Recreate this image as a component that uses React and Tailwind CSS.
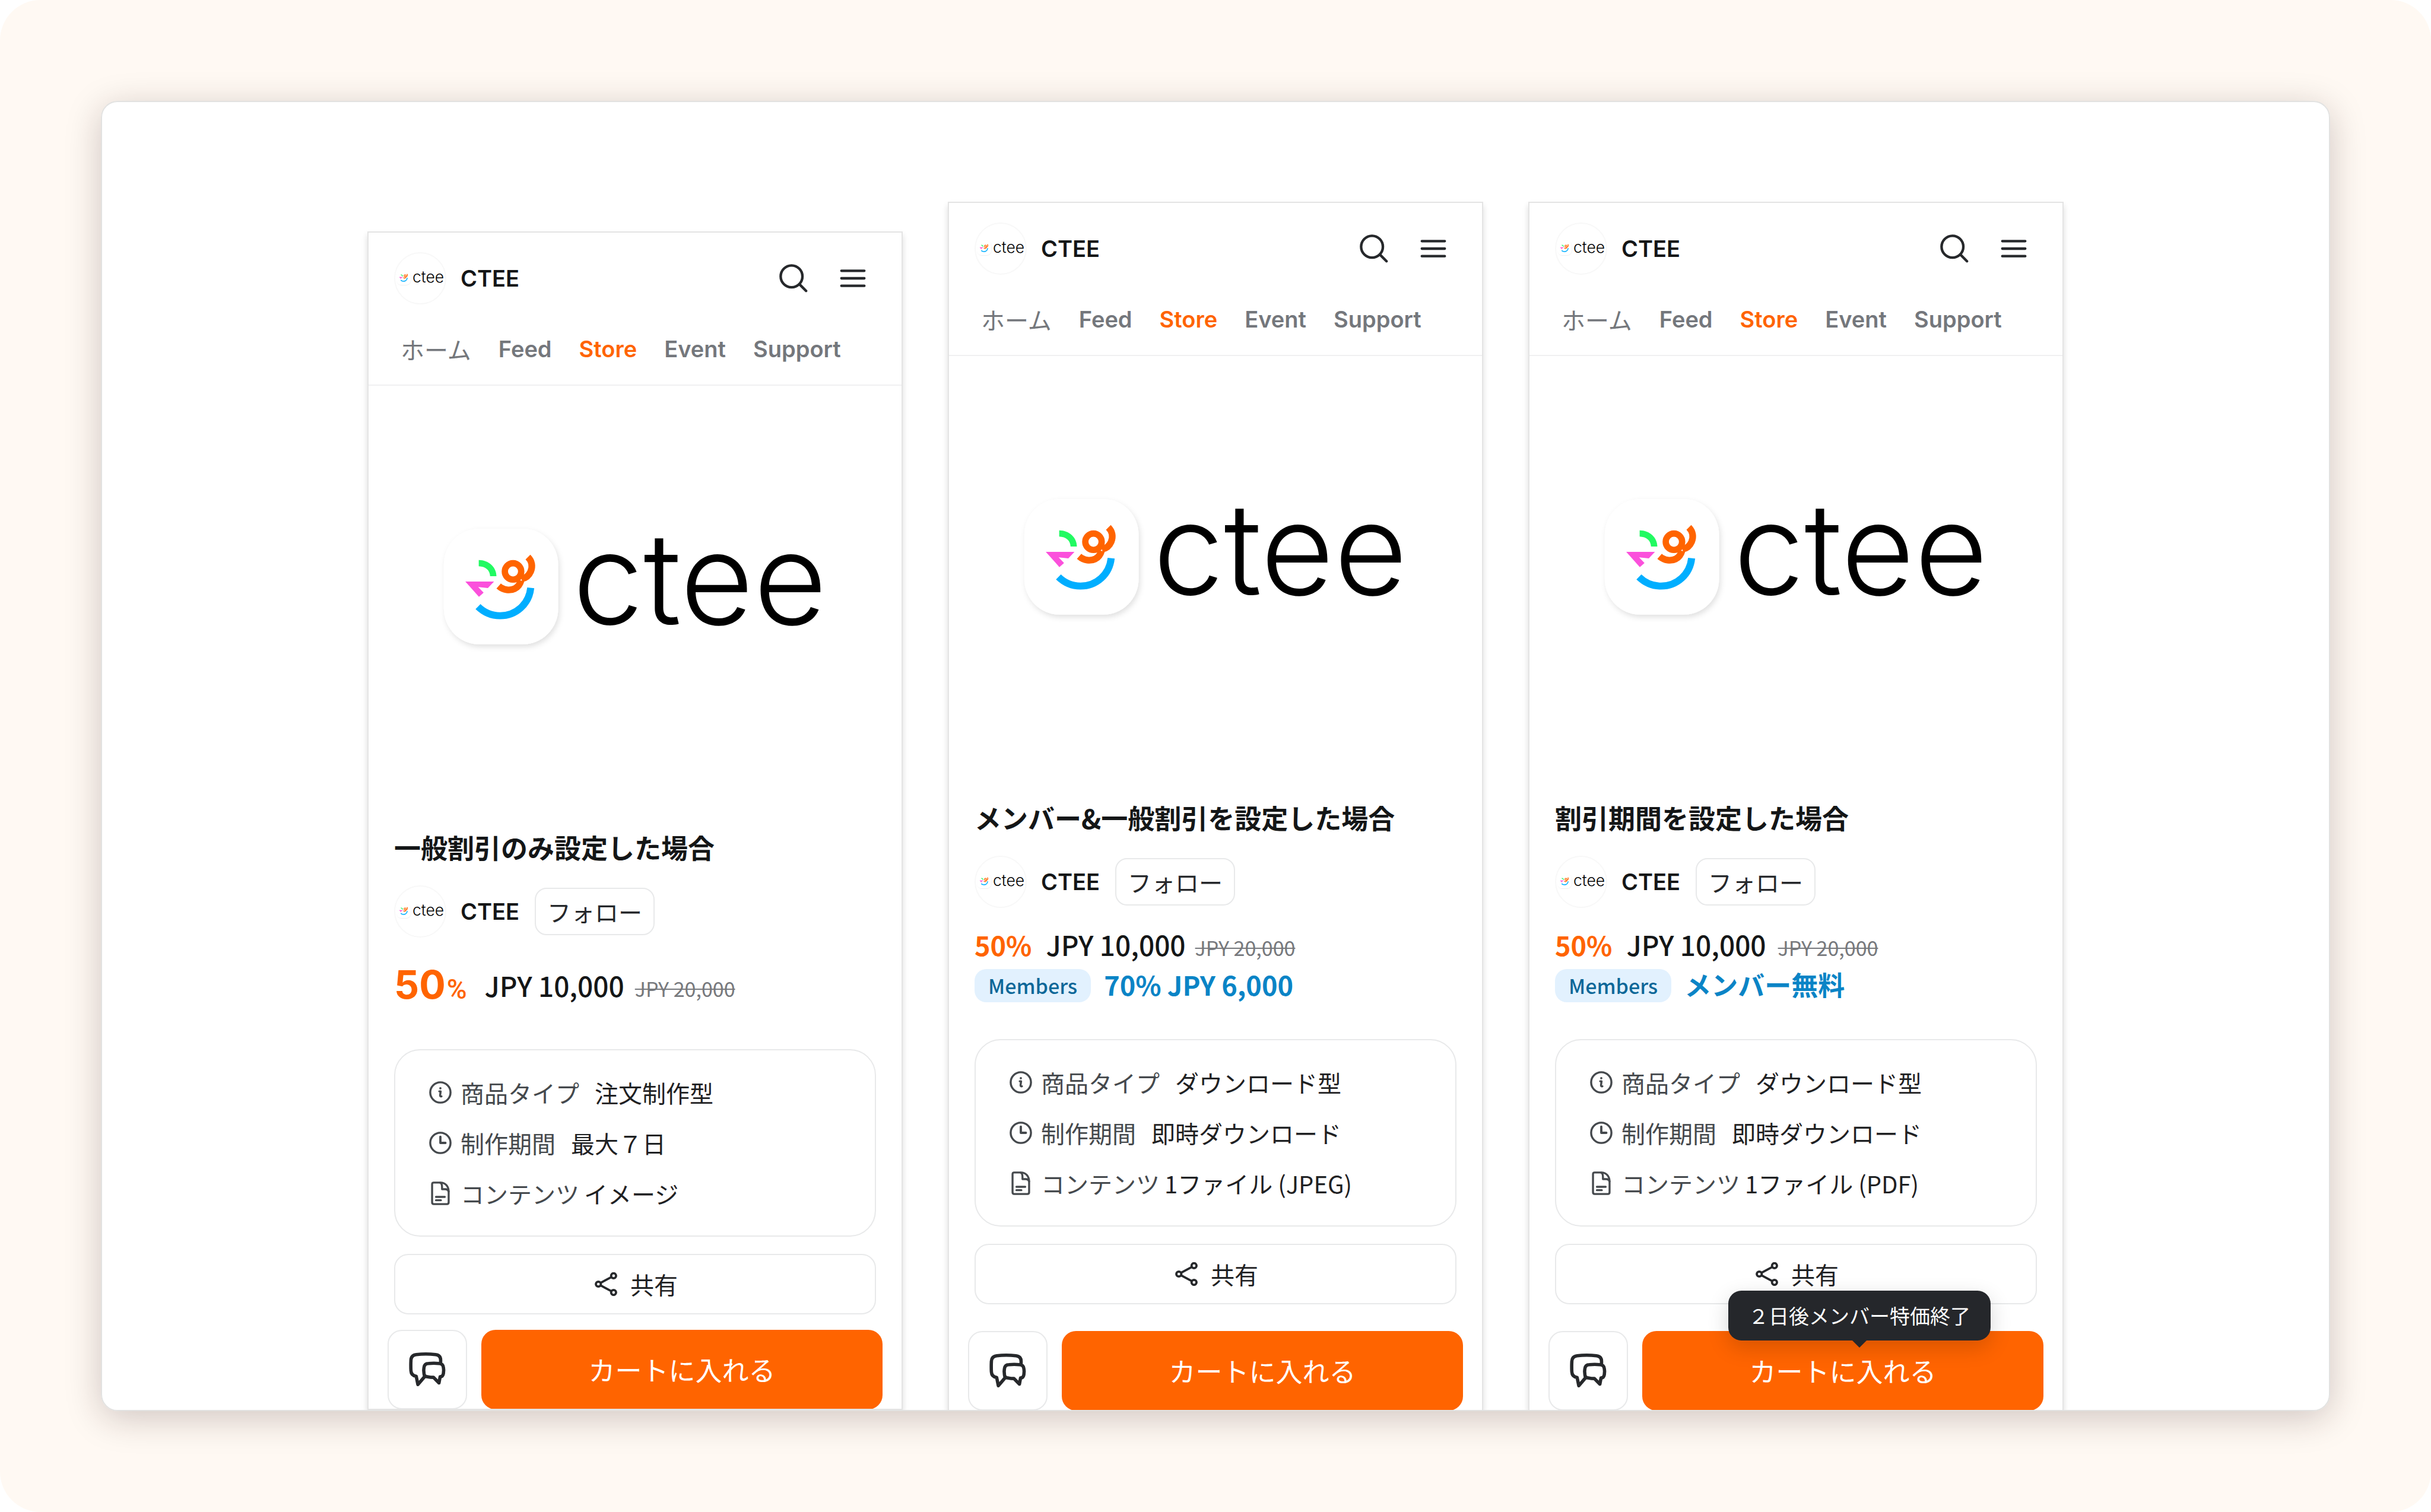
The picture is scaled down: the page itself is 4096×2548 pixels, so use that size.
import React from "react";

const products = [
  {
    id: 1,
    title: "一般割引のみ設定した場合",
    layout: "simple",
    info: [
      { icon: "info", label: "商品タイプ", value: "注文制作型" },
      { icon: "clock", label: "制作期間", value: "最大７日" },
      { icon: "file", label: "コンテンツ", value: "イメージ", tight: true },
    ],
  },
  {
    id: 2,
    title: "メンバー&一般割引を設定した場合",
    layout: "members",
    memberPrice: "70% JPY 6,000",
    priceGap: "gap-4",
    info: [
      { icon: "info", label: "商品タイプ", value: "ダウンロード型" },
      { icon: "clock", label: "制作期間", value: "即時ダウンロード" },
      { icon: "file", label: "コンテンツ", value: "1ファイル (JPEG)", tight: true },
    ],
  },
  {
    id: 3,
    title: "割引期間を設定した場合",
    layout: "members",
    memberPrice: "メンバー無料",
    priceGap: "gap-5",
    tooltip: "２日後メンバー特価終了",
    info: [
      { icon: "info", label: "商品タイプ", value: "ダウンロード型" },
      { icon: "clock", label: "制作期間", value: "即時ダウンロード" },
      { icon: "file", label: "コンテンツ", value: "1ファイル (PDF)", tight: true },
    ],
  },
];

const tabs = ["ホーム", "Feed", "Store", "Event", "Support"];

function Logo({ className, shadowId }) {
  return (
    <svg viewBox="21 0 2160 780" className={`overflow-visible ${className}`} role="img" aria-label="ctee">
      <defs>
        <filter id={shadowId} x="-20%" y="-20%" width="140%" height="140%">
          <feDropShadow dx="8" dy="14" stdDeviation="16" floodColor="#000" floodOpacity="0.12" />
        </filter>
      </defs>
      <rect x="75" y="48" width="613" height="620" rx="190" fill="#fff" filter={`url(#${shadowId})`} />
      <path d="M262 216C316 216 357 255 357 303H323C322 270 298 250 262 249Z" fill="#22fa62" />
      <path d="M190 331H344L311 366L259 361L288 391L263 413Z" fill="#fb50dc" />
      <g fill="none" stroke="#ff6400">
        <circle cx="446" cy="277" r="44" strokeWidth="34" />
        <path d="M369 355C395 378 430 382 456 369C473 360 483 347 489 326" strokeWidth="36" />
        <path d="M526 200C548 222 552 250 541 277C531 300 515 313 492 317" strokeWidth="36" />
      </g>
      <path
        d="M541 365C532 452 462 515 376 515C328 515 288 495 258 466"
        fill="none"
        stroke="#00aeff"
        strokeWidth="38"
      />
      <text x="766" y="561" fontFamily="Inter, sans-serif" fontSize="680" fontWeight="300" fill="#000">
        ctee
      </text>
    </svg>
  );
}

function Avatar({ id }) {
  return (
    <span className="flex h-[88px] w-[88px] shrink-0 items-center rounded-full border-2 border-[#f8f8f8]">
      <Logo className="w-full" shadowId={id} />
    </span>
  );
}

function SearchIcon() {
  return (
    <svg viewBox="0 0 51 51" className="h-12 w-12" fill="none" stroke="#26282b" strokeWidth="4.6" strokeLinecap="round">
      <circle cx="22" cy="22" r="19.5" />
      <path d="M36 36L48 48" />
    </svg>
  );
}

function MenuIcon() {
  return (
    <svg viewBox="0 0 46 34" className="h-8 w-11" fill="none" stroke="#26282b" strokeWidth="4.6" strokeLinecap="round">
      <path d="M2.5 3.5H43.5M2.5 17H43.5M2.5 30.5H43.5" />
    </svg>
  );
}

function InfoIcon({ type }) {
  if (type === "file") {
    return (
      <svg viewBox="0 0 34 43" className="h-10 w-8" fill="none" stroke="#45494d" strokeWidth="3.6" strokeLinecap="round" strokeLinejoin="round">
        <path d="M17 2H5Q2 2 2 5V38Q2 41 5 41H29Q32 41 32 38V18C32 9 26 2 17 2Z" />
        <path d="M17 2.5C20 4 20 8 20 10V14H26C29 14 31 15 32 18" />
        <path d="M9 28H25M9 34H18" />
      </svg>
    );
  }
  return (
    <svg viewBox="0 0 40 40" className="h-[38px] w-[38px]" fill="none" stroke="#45494d" strokeWidth="3.6" strokeLinecap="round" strokeLinejoin="round">
      <circle cx="20" cy="20" r="18" />
      {type === "clock" ? (
        <path d="M20 9V20H29" strokeWidth="4" />
      ) : (
        <>
          <circle cx="20" cy="12.5" r="2" fill="#45494d" stroke="none" />
          <path d="M18 18H20.5L19.5 25Q19.5 27.5 22 27" />
        </>
      )}
    </svg>
  );
}

function ShareIcon() {
  return (
    <svg viewBox="0 0 120 128" className="h-10 w-[38px]" fill="none" stroke="#26282b" strokeWidth="12">
      <circle cx="19" cy="64" r="13.5" />
      <circle cx="101" cy="19" r="13.5" />
      <circle cx="101" cy="109" r="13.5" />
      <path d="M31 57L89 26M31 71L89 102" />
    </svg>
  );
}

function ChatIcon() {
  return (
    <svg viewBox="0 0 66 62" className="h-[58px] w-[62px]" fill="none" stroke="#26282b" strokeWidth="6" strokeLinecap="round" strokeLinejoin="round">
      <path d="M57 17V14Q57 5 48 4Q30 2 13 4Q4 5 3.5 14Q3 24 3.5 33Q4 42 13 43L16 58L27 45" />
      <path d="M35 20Q45 19 54 20Q61 20 62 27Q63 32 62 38Q61 44 56 44L54 55L44 45Q39 45 34 44Q27 44 27 38Q26 32 27 27Q28 20 35 20Z" />
    </svg>
  );
}

function Price({ gap }) {
  return (
    <span className={`flex items-baseline ${gap}`}>
      <span className="text-[46px] font-medium text-[#141617]">JPY 10,000</span>
      <s className="text-[34px] text-[#77797d] decoration-2">JPY 20,000</s>
    </span>
  );
}

function PhoneCard({ product }) {
  const simple = product.layout === "simple";

  return (
    <article
      className={`w-[902px] shrink-0 overflow-hidden border-2 border-[#e4e4e4] bg-white shadow-[0_6px_10px_rgba(0,0,0,0.14)] ${
        simple ? "mt-[218px]" : "mt-[168px] border-b-0"
      }`}
    >
      {/* Header */}
      <header className="border-b-2 border-[#f0f0f1] pt-[33px] pb-[30px]">
        <div className="flex items-center pr-[60px] pl-[43px]">
          <Avatar id={`head-${product.id}`} />
          <span className="ml-6 font-[Inter] text-[38px] font-semibold text-[#141617]">CTEE</span>
          <button type="button" aria-label="検索" className="ml-auto">
            <SearchIcon />
          </button>
          <button type="button" aria-label="メニュー" className="ml-[54px]">
            <MenuIcon />
          </button>
        </div>
        <nav className="mt-[45px] flex items-center gap-[46px] pl-[54px] leading-[60px] text-[#74777c]">
          {tabs.map((tab) => (
            <a
              key={tab}
              href="#"
              className={
                tab === "ホーム"
                  ? "text-[40px]"
                  : `font-[Inter] text-[38px] font-semibold ${tab === "Store" ? "text-[#ff6400]" : ""}`
              }
            >
              {tab}
            </a>
          ))}
        </nav>
      </header>

      {/* Product image */}
      <div className="flex h-[696px] items-center justify-center">
        <Logo className="w-[678px]" shadowId={`hero-${product.id}`} />
      </div>

      <div className="px-[43px] pt-[50px]">
        <h2 className="text-[45px] leading-[64px] font-bold text-[#141617]">{product.title}</h2>
        <div className="mt-8 flex items-center">
          <Avatar id={`shop-${product.id}`} />
          <span className="ml-6 font-[Inter] text-[38px] font-semibold text-[#141617]">CTEE</span>
          <button
            type="button"
            className="ml-[26px] h-20 rounded-[20px] border-2 border-[#e8e9ea] px-[19px] text-[40px] leading-[76px] text-[#26282b]"
          >
            フォロー
          </button>
        </div>

        {simple ? (
          <div className="mt-[43px] flex h-20 items-center leading-[80px]">
            <span className="flex items-baseline gap-[2px] text-[#ff6400]">
              <span className="font-[Inter] text-[66px] font-bold">50</span>
              <span className="font-[Roboto] text-[46px] font-medium">%</span>
            </span>
            <span className="ml-[30px]">
              <Price gap="gap-[18px]" />
            </span>
          </div>
        ) : (
          <div className="mt-[29px]">
            <div className="flex h-16 items-baseline gap-6 leading-[64px]">
              <span className="text-[45px] font-bold text-[#ff6400]">50%</span>
              <Price gap={product.priceGap} />
            </div>
            <div className="mt-2 flex h-[60px] items-center gap-[22px]">
              <span className="h-[56px] rounded-[20px] bg-[#e2f1fe] px-[23px] text-[34px] leading-[56px] font-medium text-[#0c6798]">
                Members
              </span>
              <span className="self-start text-[45px] leading-[56px] font-bold text-[#0a84c6]">
                {product.memberPrice}
              </span>
            </div>
          </div>
        )}

        {/* Info box */}
        <dl
          className={`flex flex-col gap-[25px] rounded-[44px] border-2 border-[#e8e9ea] px-[57px] py-[41px] text-[40px] leading-[60px] ${
            simple ? "mt-[65px]" : "mt-[60px]"
          }`}
        >
          {product.info.map((row) => (
            <div key={row.label} className="flex items-center">
              <span className="mr-[15px] flex w-[38px] justify-center">
                <InfoIcon type={row.icon} />
              </span>
              <dt className="text-[#45494d]">{row.label}</dt>
              <dd className={`text-[#1f2123] ${row.tight ? "ml-2" : "ml-[26px]"}`}>{row.value}</dd>
            </div>
          ))}
        </dl>

        <button
          type="button"
          className="mt-[29px] flex h-[102px] w-full items-center justify-center gap-[22px] rounded-[24px] border-2 border-[#e8e9ea] pl-1 text-[40px] text-[#1f2123]"
        >
          <ShareIcon />
          共有
        </button>
      </div>

      {/* Bottom bar */}
      <div className={`flex gap-6 px-8 ${simple ? "mt-[26px]" : "mt-[45px]"}`}>
        <button
          type="button"
          aria-label="チャット"
          className="flex h-[134px] w-[134px] shrink-0 items-center justify-center rounded-[24px] border-2 border-[#e8e9ea]"
        >
          <ChatIcon />
        </button>
        <div className="relative flex-1">
          <button type="button" className="h-[134px] w-full rounded-[24px] bg-[#ff6400] text-[45px] text-white">
            カートに入れる
          </button>
          {product.tooltip && (
            <div
              role="tooltip"
              className="absolute -top-[68px] left-1/2 ml-7 h-[84px] -translate-x-1/2 rounded-[22px] bg-[#25272b] px-[34px] text-[34px] leading-[84px] whitespace-nowrap text-white shadow-[0_12px_36px_rgba(0,0,0,0.16)]"
            >
              {product.tooltip}
              <svg viewBox="0 0 24 12" className="absolute top-full left-1/2 h-3 w-6 -translate-x-1/2" fill="#25272b">
                <path d="M0 0H24L12 12Z" />
              </svg>
            </div>
          )}
        </div>
      </div>
    </article>
  );
}

export default function App() {
  return (
    <div className="bg-white font-['Noto_Sans_CJK_JP',sans-serif]" lang="ja">
      <main className="h-screen rounded-[68px] bg-[#fff9f3] p-[170px]">
        <div className="h-full rounded-[28px] shadow-[0_12px_60px_rgba(40,20,20,0.22)]">
          <div className="flex h-full justify-center gap-[76px] overflow-hidden rounded-[28px] border-2 border-[#e2e2e1] bg-white">
            {products.map((product) => (
              <PhoneCard key={product.id} product={product} />
            ))}
          </div>
        </div>
      </main>
    </div>
  );
}
